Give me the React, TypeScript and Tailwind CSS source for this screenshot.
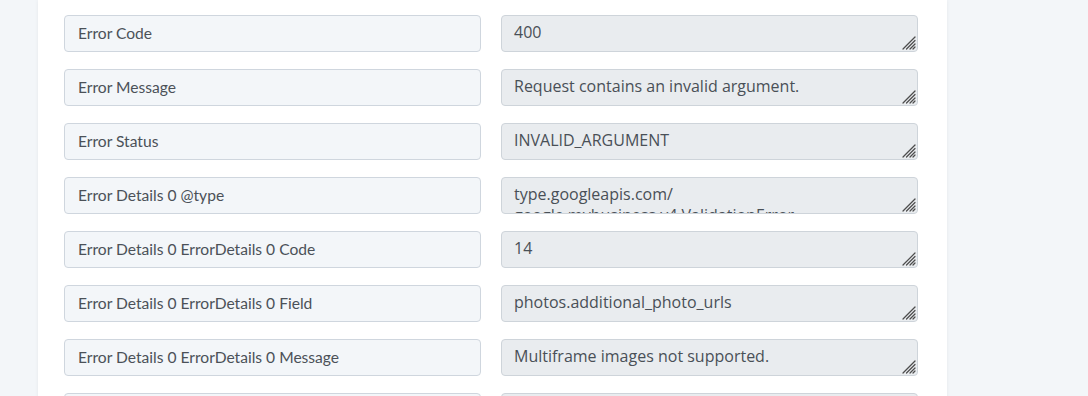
import React from 'react';

const rows: [string, string][] = [
  ['Error Code', '400'],
  ['Error Message', 'Request contains an invalid argument.'],
  ['Error Status', 'INVALID_ARGUMENT'],
  ['Error Details 0 @type', 'type.googleapis.com/\u200Bgoogle.mybusiness.v4.ValidationError'],
  ['Error Details 0 ErrorDetails 0 Code', '14'],
  ['Error Details 0 ErrorDetails 0 Field', 'photos.additional_photo_urls'],
  ['Error Details 0 ErrorDetails 0 Message', 'Multiframe images not supported.'],
  ['Error Details 0 ErrorDetails 0 Value', ''],
];

function Grip() {
  return (
    <svg
      width="14"
      height="14"
      viewBox="0 0 14 14"
      className="absolute right-[2px] bottom-[2px] pointer-events-none"
    >
      <g stroke="#4d4d4d" strokeWidth="1.2" strokeLinecap="round">
        <line x1="13" y1="1" x2="1" y2="13" />
        <line x1="13" y1="4.5" x2="4.5" y2="13" />
        <line x1="13" y1="8" x2="8" y2="13" />
        <line x1="13" y1="11" x2="11" y2="13" />
      </g>
    </svg>
  );
}

export default function App() {
  return (
    <div className="h-[396px] overflow-hidden bg-[#f3f6f9] pl-[38px]">
      <div className="w-[909px] bg-white shadow-[0_0_4px_rgba(0,0,0,0.06)] pl-[26px] pr-[29px] pt-[15px] pb-10">
        <div className="flex flex-col gap-[17px]">
          {rows.map(([label, value]) => (
            <div key={label} className="flex gap-[20px]">
              <input
                readOnly
                value={label}
                className="w-[417px] h-[37px] rounded-[4px] border border-[#cfd6de] bg-[#f3f6f9] px-[13px] pb-[2px] text-[15.6px] text-[#4b5158] outline-none"
                style={{ fontFamily: 'Lato, "Open Sans", sans-serif' }}
              />
              <div className="relative w-[417px] h-[37px]">
                <textarea
                  readOnly
                  value={value}
                  className="block w-full h-full rounded-[4px] border border-[#ced4da] bg-[#e9ecef] px-[12px] pt-[6px] pb-0 text-[16px] leading-[21px] text-[#495057] outline-none overflow-hidden resize-none"
                  style={{ fontFamily: '"Open Sans", sans-serif' }}
                />
                <Grip />
              </div>
            </div>
          ))}
        </div>
      </div>
    </div>
  );
}
